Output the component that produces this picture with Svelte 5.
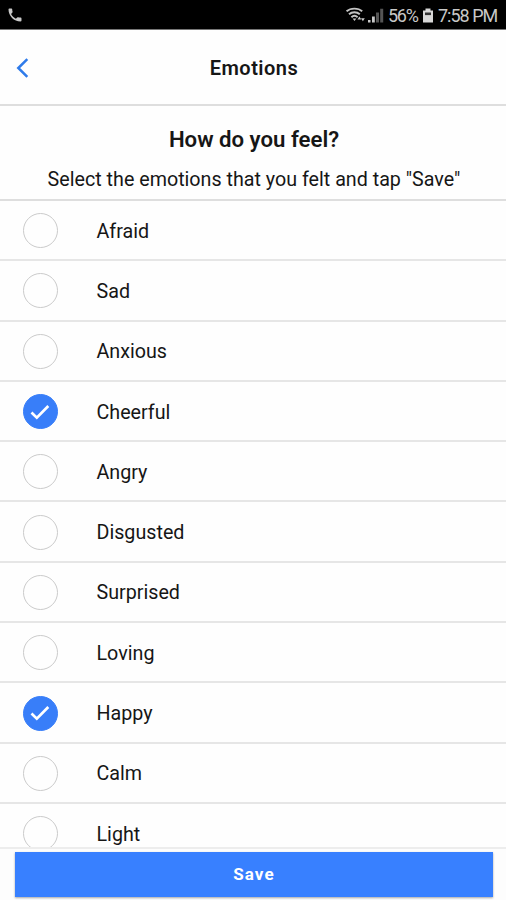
<script lang="ts">
  type Emotion = { name: string; selected: boolean };

  let emotions: Emotion[] = $state([
    { name: 'Afraid', selected: false },
    { name: 'Sad', selected: false },
    { name: 'Anxious', selected: false },
    { name: 'Cheerful', selected: true },
    { name: 'Angry', selected: false },
    { name: 'Disgusted', selected: false },
    { name: 'Surprised', selected: false },
    { name: 'Loving', selected: false },
    { name: 'Happy', selected: true },
    { name: 'Calm', selected: false },
    { name: 'Light', selected: false }
  ]);

  function toggle(emotion: Emotion) {
    emotion.selected = !emotion.selected;
  }
</script>

<div class="screen">
  <div class="status-bar">
    <svg class="phone" width="14" height="14" viewBox="0 0 14 14">
      <path d="M.5 1.2C.5.7.9.4 1.4.4h2c.5 0 .8.3.8.8 0 .9.1 1.7.4 2.5.1.3 0 .7-.2.9L3.1 6c1 2 2.7 3.7 4.8 4.8l1.3-1.4c.3-.2.6-.3.9-.2.8.3 1.7.4 2.5.4.5 0 .9.4.9.9v2c0 .5-.4.9-.9.9C5.9 13.4.5 8 .5 1.2z" />
    </svg>
    <div class="status-right">
      <svg class="wifi" width="20" height="16" viewBox="0 0 20 16">
        <g fill="none" stroke="#c4c4c4" stroke-width="1.9">
          <path d="M.6 4.3C4.600.7 12.200.7 16.200 4.300" />
          <path d="M3 7.300C6 4.500 10.800 4.500 13.800 7.300" />
          <path d="M5.400 10.200C7.200 8.500 9.800 8.500 11.600 10.200" />
        </g>
        <path d="M6.600 11.600h3.800L8.500 14z" />
        <path d="M11.400 12.600l2-3.100 2 3.100zM15 11.200h3.800l-1.900 3.100z" />
      </svg>
      <svg class="signal" width="16" height="15" viewBox="0 0 16 15">
        <path d="M0 12h2.500v2.500H0zM4 8.500h2.800v6H4z" />
        <path d="M8 4.500h3v10H8zM12.200.8h3v13.700h-3z" fill="#555" />
      </svg>
      <span class="percent">56%</span>
      <svg class="battery" width="12" height="15" viewBox="0 0 12 15">
        <path d="M3.500.5h5v2H11v12H1v-12h2.500z" fill="#d8d8d8" />
        <path d="M3 4.500h6v2.600H3z" fill="#333" />
      </svg>
      <span class="time">7:58 PM</span>
    </div>
  </div>

  <header class="toolbar">
    <button class="back" aria-label="Back">
      <svg width="14" height="22" viewBox="0 0 14 22">
        <path d="M11.300 2.200L2.300 11l9 8.800" />
      </svg>
    </button>
    <h1>Emotions</h1>
  </header>

  <section class="prompt">
    <h2>How do you feel?</h2>
    <p>Select the emotions that you felt and tap "Save"</p>
  </section>

  <ul class="list">
    {#each emotions as emotion (emotion.name)}
      <li>
        <button class="item" onclick={() => toggle(emotion)}>
          <span class="checkbox" class:checked={emotion.selected}>
            {#if emotion.selected}
              <svg width="20" height="16" viewBox="0 0 20 16">
                <path d="M1.500 8.500L6.800 13.600 18.300 2" />
              </svg>
            {/if}
          </span>
          <span class="label">{emotion.name}</span>
        </button>
      </li>
    {/each}
  </ul>

  <footer>
    <button class="save">Save</button>
  </footer>
</div>

<style>
  :global(body) {
    margin: 0;
    background: #fff;
  }

  .screen {
    display: flex;
    flex-direction: column;
    width: 506px;
    height: 900px;
    overflow: hidden;
    background: #fefefe;
    color: #161616;
    font-family: Roboto, 'Liberation Sans', sans-serif;
  }

  button {
    border: 0;
    padding: 0;
    background: none;
    color: inherit;
    font-family: inherit;
    cursor: pointer;
  }

  .status-bar {
    display: flex;
    flex: none;
    align-items: center;
    justify-content: space-between;
    box-sizing: border-box;
    height: 30px;
    padding: 0 8px;
    border-bottom: 1px solid #777;
    background: #000;
    color: #c8c8c8;
    fill: #c8c8c8;
  }

  .status-right {
    display: flex;
    align-items: center;
    padding-top: 1px;
    font-size: 18px;
    line-height: 29px;
    white-space: nowrap;
  }

  .signal {
    margin-left: 2px;
  }

  .percent {
    width: 30px;
    margin-left: 4px;
    font-size: 18px;
    letter-spacing: -1.3px;
  }

  .battery {
    margin-left: 4px;
  }

  .time {
    width: 60px;
    margin-left: 4px;
    letter-spacing: -1px;
  }

  .toolbar {
    display: grid;
    flex: none;
    grid-template-columns: 60px 1fr 60px;
    align-items: center;
    box-sizing: border-box;
    height: 76px;
    padding-top: 1px;
    border-bottom: 2px solid #dedede;
  }

  .back {
    display: flex;
    padding-left: 16px;
  }

  .back path {
    fill: none;
    stroke: #2f7bea;
    stroke-width: 2.5;
  }

  h1 {
    margin: 1px 0 0 2px;
    font-size: 20px;
    font-weight: 600;
    line-height: 24px;
    letter-spacing: 0.5px;
    text-align: center;
  }

  .prompt {
    flex: none;
    box-sizing: border-box;
    height: 95px;
    padding: 19px 0 0 2px;
    border-bottom: 2px solid #dedede;
    text-align: center;
  }

  h2 {
    margin: 0;
    font-size: 22.2px;
    font-weight: 600;
    line-height: 28px;
  }

  p {
    margin: 15px 0 0;
    font-size: 19.7px;
    line-height: 24px;
    white-space: nowrap;
  }

  .list {
    flex: 1;
    min-height: 0;
    margin: 0;
    padding: 0;
    overflow: hidden;
    list-style: none;
  }

  .item {
    display: flex;
    align-items: center;
    box-sizing: border-box;
    width: 100%;
    height: 60.3px;
    padding: 1px 0 0 22.5px;
    border-bottom: 2px solid #e6e6e6;
  }

  .checkbox {
    display: flex;
    align-items: center;
    justify-content: center;
    box-sizing: border-box;
    width: 35px;
    height: 35px;
    border: 1px solid #cbcbcb;
    border-radius: 50%;
  }

  .checked {
    border-color: #387ef9;
    background: #387ef9;
  }

  .checkbox path {
    fill: none;
    stroke: #fff;
    stroke-width: 2.7;
  }

  .label {
    margin-left: 39px;
    padding-top: 2px;
    font-size: 19.7px;
    line-height: 24px;
  }

  footer {
    flex: none;
    box-sizing: border-box;
    height: 53px;
    padding: 3px 13px 0 15px;
    border-top: 2px solid #ededed;
    background: #fdfdfd;
  }

  .save {
    display: block;
    width: 100%;
    height: 45px;
    padding-bottom: 2px;
    background: #3880ff;
    box-shadow: 0 1px 2px rgba(0, 0, 0, 0.35);
    color: #fff;
    font-size: 17px;
    font-weight: 700;
    letter-spacing: 1.1px;
  }
</style>
